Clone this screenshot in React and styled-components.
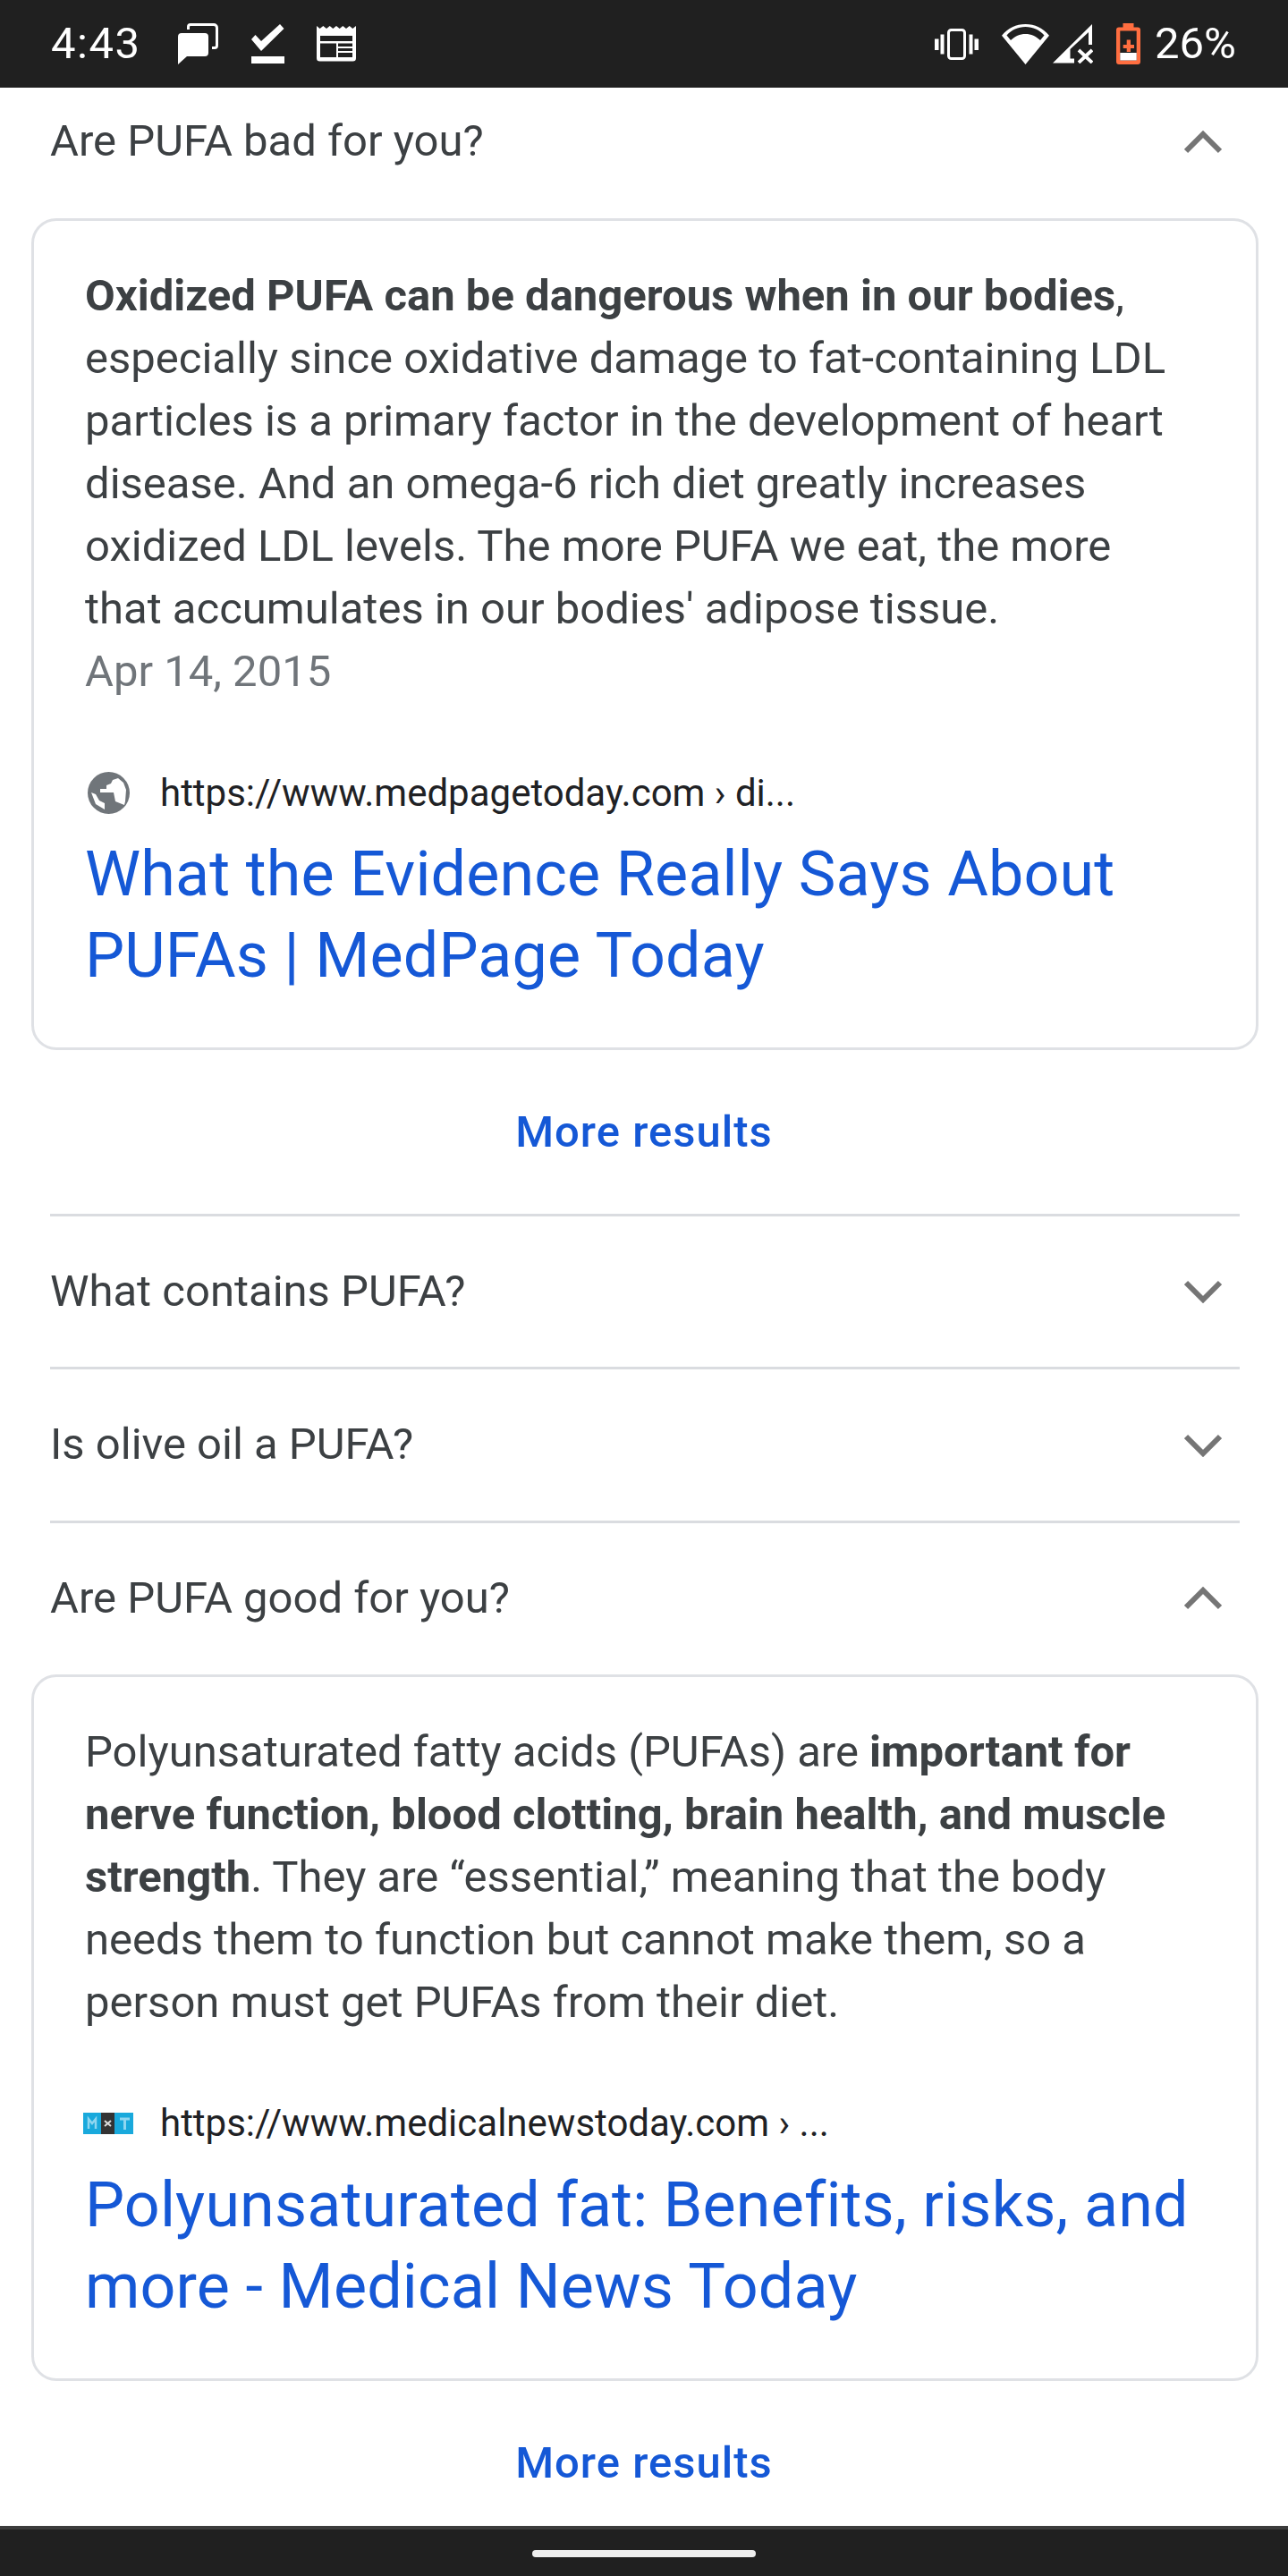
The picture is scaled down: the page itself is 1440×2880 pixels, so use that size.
import React from "react";
import styled, { createGlobalStyle } from "styled-components";

const GlobalStyle = createGlobalStyle`
  html, body {
    margin: 0;
    padding: 0;
    background: #fff;
  }
  * {
    box-sizing: border-box;
  }
`;

const ChatIcon = () => (
  <svg width="45" height="46" viewBox="0 0 45 46">
    <path fill="#fff" d="M4 11h26a4 4 0 0 1 4 4v18a4 4 0 0 1-4 4H10l-10 9V15a4 4 0 0 1 4-4z" />
    <path fill="none" stroke="#fff" strokeWidth="3" d="M11.500 7V4a2.500 2.500 0 0 1 2.500-2.500h26a3.500 3.500 0 0 1 3.500 3.500v20a2.500 2.500 0 0 1-2.500 2.500h-3" />
  </svg>
);

const CheckIcon = () => (
  <svg width="37" height="44" viewBox="0 0 37 44">
    <path fill="#fff" d="M0 17l4.500-5 6.500 7L32 0l4.500 5L11 30z" />
    <rect x="0" y="36" width="37" height="8" fill="#fff" />
  </svg>
);

const NewsIcon = () => (
  <svg width="44" height="40" viewBox="0 0 44 40">
    <path
      fill="#fff"
      fillRule="evenodd"
      d="M0 0l3.600 3L7.300 0l3.700 3 3.700-3 3.600 3L22 0l3.700 3 3.600-3L33 3l3.700-3 3.600 3L44 0v36a3.500 3.500 0 0 1-3.500 3.500h-37A3.500 3.500 0 0 1 0 36zM4 11v6h36v-6zM4 19.500V35h18V19.500zM24 19.500V23h16v-3.500zM24 25v3h16v-3zM24 30v5h16v-5z"
    />
  </svg>
);

const VibrateIcon = () => (
  <svg width="49" height="35" viewBox="0 0 49 35">
    <rect x="15.500" y="1.500" width="18" height="32" rx="3" fill="none" stroke="#fff" strokeWidth="3" />
    <path fill="#fff" d="M0 11.500h4.500V24H0zM6.500 6.500h4V28.500h-4zM38.500 6.500h4V28.500h-4zM44.500 11.500H49V24h-4.500z" />
  </svg>
);

const WifiIcon = () => (
  <svg width="53" height="45" viewBox="0 0 53 45">
    <path
      fill="#fff"
      fillRule="evenodd"
      d="M26.500 45L0 12.700C7 4.500 16 0 26.500 0S46 4.500 53 12.700zM5.500 12.500L10 18c5-4.500 10-7 16.500-7S38 13.500 43 18l4.500-5.500C42 6.500 35 3 26.500 3S11 6.500 5.500 12.500z"
    />
  </svg>
);

const SignalIcon = () => (
  <svg width="45" height="44" viewBox="0 0 45 44">
    <path fill="#fff" d="M0 43.500L44 0v23h-4V9L19.500 28v10.500H24v5z" />
    <path fill="none" stroke="#fff" strokeWidth="3.800" d="M29 29l15 14M44 29L29 43" />
  </svg>
);

const BatteryIcon = () => (
  <svg width="27" height="46" viewBox="0 0 27 46">
    <path
      fill="#ff6e40"
      fillRule="evenodd"
      d="M7.500 0h12v4.500H24a3 3 0 0 1 3 3V43a3 3 0 0 1-3 3H3a3 3 0 0 1-3-3V7.500a3 3 0 0 1 3-3h4.500zM4.300 8.500V41.500h18.400V8.500z"
    />
    <rect x="4.300" y="33" width="18.400" height="8.500" fill="#fff" />
    <path fill="#ff6e40" d="M11.700 18.500H16V24h4v4h-4v4h-4.300v-4H7.700v-4h4z" />
  </svg>
);

const ChevronIcon = ({ up }) => (
  <svg width="42" height="26" viewBox="0 0 42 26">
    <path
      fill="none"
      stroke="#757575"
      strokeWidth="6"
      d={up ? "M2 23L21 4l19 19" : "M2 3l19 19L40 3"}
    />
  </svg>
);

const GlobeIcon = () => (
  <svg width="47" height="47" viewBox="0 0 47 47">
    <circle cx="23.500" cy="23.500" r="23.500" fill="#70757a" />
    <path fill="#fff" d="M14 19h7v-4l5-2 2-4 6-2 6 5 3 8-1 13-1 4-10-4-2-10H14zM4 23l5 2 4 7 6 3v7l-10-6z" />
  </svg>
);

const MntIcon = () => (
  <svg width="56" height="24" viewBox="0 0 56 24">
    <rect width="56" height="24" fill="#19a9dc" />
    <rect x="20" width="15" height="24" fill="#333" />
    <path fill="none" stroke="#8fd6f0" strokeWidth="2.500" d="M6 18V7l4 5 4-5v11" />
    <path fill="none" stroke="#ddd" strokeWidth="2" d="M24 9l7 6M31 9l-7 6" />
    <path fill="none" stroke="#8fd6f0" strokeWidth="3" d="M41 7h11M46.500 7v12" />
  </svg>
);

const App = () => (
  <>
    <GlobalStyle />
    <Screen>
      <StatusBar>
        <StatusGroup>
          <TimeText>4:43</TimeText>
          <IconSlot $gap="42px">
            <ChatIcon />
          </IconSlot>
          <IconSlot $gap="37px">
            <CheckIcon />
          </IconSlot>
          <IconSlot $gap="36px">
            <NewsIcon />
          </IconSlot>
        </StatusGroup>
        <StatusGroup>
          <VibrateIcon />
          <IconSlot $gap="26px">
            <WifiIcon />
          </IconSlot>
          <IconSlot $gap="4px">
            <SignalIcon />
          </IconSlot>
          <IconSlot $gap="26px">
            <BatteryIcon />
          </IconSlot>
          <IconSlot $gap="16px">
            <StatusText>26%</StatusText>
          </IconSlot>
        </StatusGroup>
      </StatusBar>
      <Content>
        <Question $clipped>
          <QuestionText>Are PUFA bad for you?</QuestionText>
          <ChevronIcon up />
        </Question>
        <Card>
          <Snippet>
            <b>Oxidized PUFA can be dangerous when in our bodies</b>, especially
            since oxidative damage to fat-containing LDL particles is a primary
            factor in the development of heart disease. And an omega-6 rich diet
            greatly increases oxidized LDL levels. The more PUFA we eat, the
            more that accumulates in our bodies' adipose tissue.
          </Snippet>
          <DateLine>Apr 14, 2015</DateLine>
          <Source>
            <FavSlot>
              <GlobeIcon />
            </FavSlot>
            <SourceUrl>https://www.medpagetoday.com › di...</SourceUrl>
          </Source>
          <ResultTitle>What the Evidence Really Says About PUFAs | MedPage Today</ResultTitle>
        </Card>
        <MoreResults>More results</MoreResults>
        <Divider />
        <Question>
          <QuestionText>What contains PUFA?</QuestionText>
          <ChevronIcon />
        </Question>
        <Divider />
        <Question>
          <QuestionText>Is olive oil a PUFA?</QuestionText>
          <ChevronIcon />
        </Question>
        <Divider />
        <Question>
          <QuestionText>Are PUFA good for you?</QuestionText>
          <ChevronIcon up />
        </Question>
        <Card>
          <Snippet>
            Polyunsaturated fatty acids (PUFAs) are{" "}
            <b>important for nerve function, blood clotting, brain health, and muscle strength</b>.
            They are “essential,” meaning that the body needs them to function
            but cannot make them, so a person must get PUFAs from their diet.
          </Snippet>
          <Source>
            <FavSlot $inset="-2px">
              <MntIcon />
            </FavSlot>
            <SourceUrl>https://www.medicalnewstoday.com › ...</SourceUrl>
          </Source>
          <ResultTitle>Polyunsaturated fat: Benefits, risks, and more - Medical News Today</ResultTitle>
        </Card>
        <MoreResults>More results</MoreResults>
      </Content>
      <NavBar>
        <NavPill />
      </NavBar>
    </Screen>
  </>
);

const Screen = styled.div`
  width: 1440px;
  height: 2880px;
  display: flex;
  flex-direction: column;
  overflow: hidden;
  background: #fff;
  font-family: Roboto, "Liberation Sans", sans-serif;
`;
const StatusBar = styled.div`
  height: 98px;
  flex: none;
  background: #202020;
  display: flex;
  justify-content: space-between;
  align-items: center;
  padding: 0 58px 0 57px;
`;
const StatusGroup = styled.div`
  display: flex;
  align-items: center;
`;
const IconSlot = styled.div`
  display: flex;
  margin-left: ${(props) => props.$gap};
`;
const StatusText = styled.span`
  color: #fff;
  font-size: 49px;
  line-height: 56px;
`;
const TimeText = styled(StatusText)`
  letter-spacing: 1.5px;
`;
const Content = styled.div`
  flex: 1;
  overflow: hidden;
`;
const Question = styled.div`
  height: ${(props) => (props.$clipped ? "146px" : "168.7px")};
  margin: 0 54px 0 56px;
  padding-bottom: ${(props) => (props.$clipped ? "25px" : "0")};
  display: flex;
  justify-content: space-between;
  align-items: center;
  padding-right: 20px;
`;
const QuestionText = styled.span`
  font-size: 49px;
  color: #3c4043;
  margin-bottom: 2px;
`;
const Divider = styled.div`
  height: 3px;
  margin: 0 54px 0 56px;
  background: #dadce0;
`;
const Card = styled.div`
  margin: 0 33px 0 35px;
  border: 3px solid #dfe1e5;
  border-radius: 28px;
  padding: 49px 30px 57px 57px;
`;
const Snippet = styled.div`
  font-size: 49px;
  line-height: 70px;
  color: #3c4043;
  padding-right: 60px;
  b {
    font-weight: 700;
  }
`;
const DateLine = styled.div`
  font-size: 49px;
  line-height: 70px;
  color: #70757a;
`;
const Source = styled.div`
  display: flex;
  align-items: center;
  height: 146px;
  padding-top: 54px;
`;
const FavSlot = styled.div`
  width: 84px;
  display: flex;
  align-items: center;
  margin-left: ${(props) => props.$inset || "3px"};
  margin-right: ${(props) => (props.$inset ? "2px" : "-3px")};
`;
const SourceUrl = styled.span`
  font-size: 42px;
  color: #202124;
`;
const ResultTitle = styled.div`
  font-size: 70px;
  line-height: 91px;
  letter-spacing: 0.15px;
  color: #1558d6;
`;
const MoreResults = styled.div`
  height: 182.7px;
  display: flex;
  align-items: center;
  justify-content: center;
  font-size: 49px;
  font-weight: 500;
  letter-spacing: 1px;
  color: #1558d6;
`;
const NavBar = styled.div`
  height: 56px;
  flex: none;
  background: #202020;
  border-top: 4px solid #3c3c3c;
  display: flex;
  justify-content: center;
  padding-top: 23px;
`;
const NavPill = styled.div`
  width: 250px;
  height: 8px;
  border-radius: 4px;
  background: #eee;
`;

export default App;
